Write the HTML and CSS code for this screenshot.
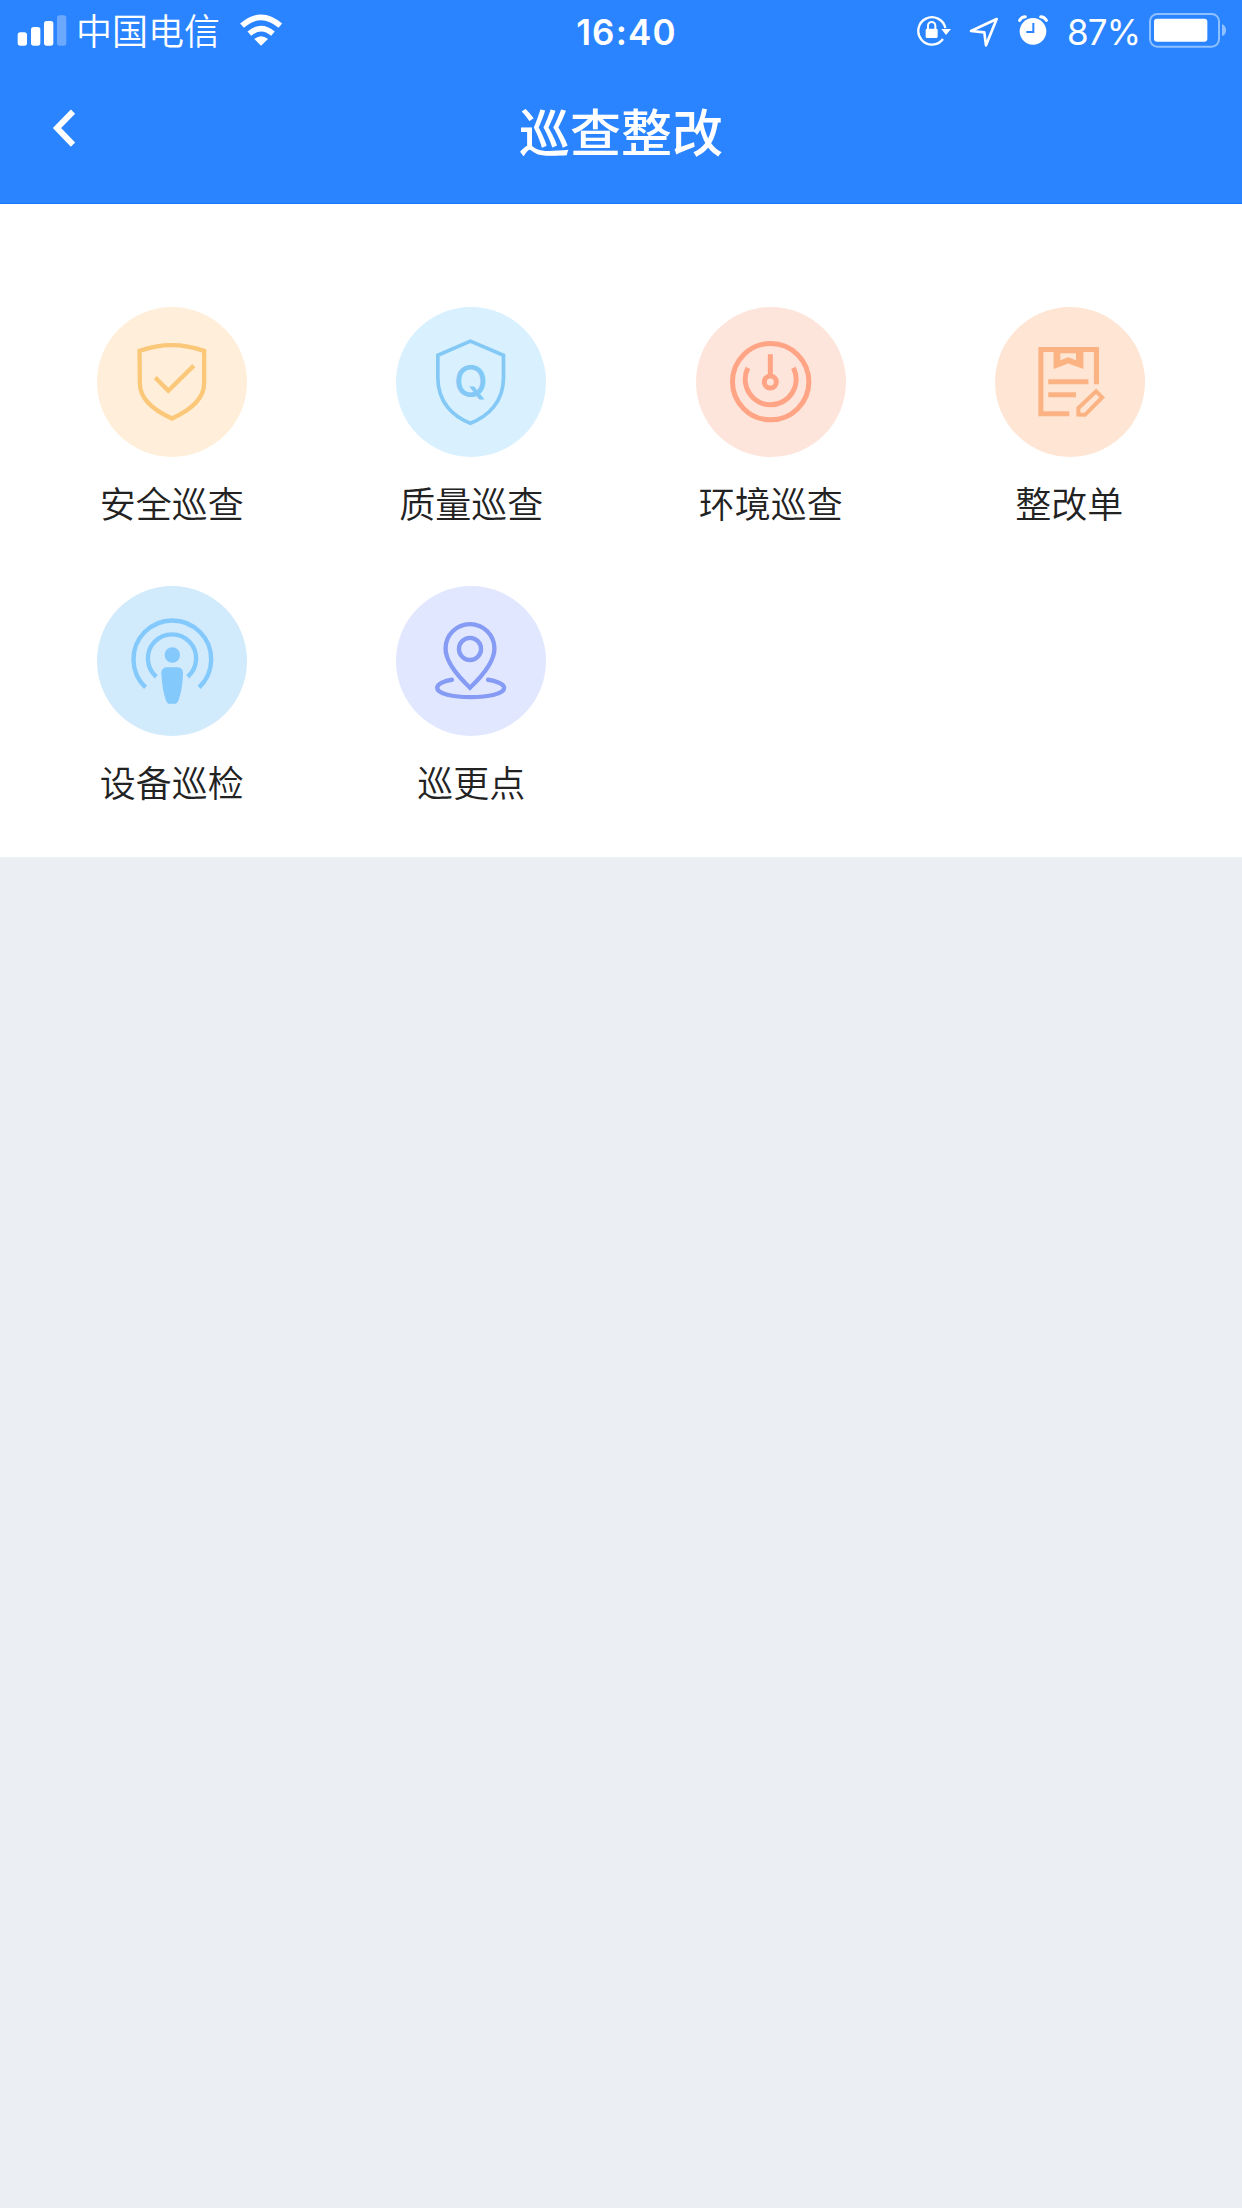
FILE: index.html
```html
<!DOCTYPE html>
<html lang="zh-CN">
<head>
<meta charset="utf-8">
<title>巡查整改</title>
<link rel="stylesheet" href="styles.css">
</head>
<body>
<header class="header">
  <div class="status">
    <div class="status-left">
      <svg class="signal" viewBox="51 45 150 93" fill="#fff">
        <rect x="53" y="97" width="28" height="40" rx="8"/>
        <rect x="93" y="81" width="28" height="56" rx="8"/>
        <rect x="132" y="63" width="28" height="74" rx="8"/>
        <rect x="171" y="46" width="28" height="91" rx="8" opacity=".3"/>
      </svg>
      <span class="carrier">中国电信</span>
      <svg class="wifi" viewBox="717 42 132 96" fill="none" stroke="#fff" stroke-width="17">
        <path d="M726 77Q783 27 841 77"/>
        <path d="M748 101Q783 71 819 101"/>
        <path d="M763 117Q783 100 804 117L783 137Z" fill="#fff" stroke="none"/>
      </svg>
    </div>
    <span class="time">16:40</span>
    <div class="status-right">
      <svg class="lock" viewBox="48 42 105 96" fill="none" stroke="#fff" stroke-width="7">
        <path d="M129 117A41 41 0 1 1 136 84"/>
        <path d="M124 87H153L138 105Z" fill="#fff" stroke="none"/>
        <path d="M84 88V77a11 11 0 0 1 22 0V88" stroke-width="6"/>
        <rect x="77" y="86" width="36" height="28" rx="4" fill="#fff" stroke="none"/>
      </svg>
      <svg class="locate" viewBox="207 48 90 90" fill="none" stroke="#fff" stroke-width="8" stroke-linejoin="round">
        <path d="M290 54L213 90L253 94L258 133Z"/>
      </svg>
      <svg class="alarm" viewBox="354 42 90 93" fill="none">
        <circle cx="399" cy="94" r="40" fill="#fff"/>
        <path d="M359 61Q365 50 376 50M439 61Q433 50 422 50" stroke="#fff" stroke-width="9" stroke-linecap="round"/>
        <path d="M400 69V96H379" stroke="#2a84ff" stroke-width="6"/>
      </svg>
      <span class="percent">87%</span>
      <svg class="battery" viewBox="747 39 234 105">
        <rect x="750" y="42" width="207" height="98" rx="22" fill="none" stroke="#8fc0ff" stroke-width="6"/>
        <rect x="762" y="56" width="160" height="69" rx="9" fill="#fff"/>
        <path d="M966 73Q978 77 978 91T966 108Z" fill="#8fc0ff"/>
      </svg>
    </div>
  </div>
  <nav class="navbar">
    <svg class="back" viewBox="153 324 78 120" fill="none" stroke="#fff" stroke-width="18">
      <path d="M219 335L171 384L219 434"/>
    </svg>
    <h1 class="title">巡查整改</h1>
  </nav>
</header>
<main class="menu">
  <a class="item">
    <svg class="icon amber" viewBox="54 53 448 448">
      <path d="M181 184Q230 167 277 167T374 184V281C374 330 329 363 278 386C226 363 182 330 182 281Z"/>
      <path d="M228 264L267 303L343 228"/>
    </svg>
    <span class="label">安全巡查</span>
  </a>
  <a class="item">
    <svg class="icon sky" viewBox="50 53 448 448">
      <path d="M272 155L371 197V265C371 337 324 380 272 400C220 380 175 337 175 265V197Z"/>
      <text class="letter" x="273" y="323">Q</text>
    </svg>
    <span class="label">质量巡查</span>
  </a>
  <a class="item">
    <svg class="icon coral" viewBox="49 53 448 448">
      <circle cx="272" cy="276" r="114"/>
      <circle cx="271" cy="277" r="18"/>
      <path d="M271 194V257M204 235A76 76 0 1 0 340 235"/>
    </svg>
    <span class="label">环境巡查</span>
  </a>
  <a class="item">
    <svg class="icon orange" viewBox="50 53 448 448">
      <path d="M272 372H187V180H353V284"/>
      <path d="M209 276H329M209 315H292"/>
      <path d="M225 180H314V238L269 222L225 238Z" fill="#fbb383" stroke="none"/>
      <path d="M245 191H292V212L269 203L245 212Z" fill="#fee5d4" stroke="none"/>
      <path d="M299 374V355L352 305L370 323L319 375Z" stroke-width="12"/>
    </svg>
    <span class="label label-short">整改单</span>
  </a>
  <a class="item">
    <svg class="icon blue" viewBox="53 51 448 448">
      <path d="M198 354A116 116 0 1 1 358 354M230 322A72 72 0 1 1 324 322"/>
      <circle class="solid" cx="278" cy="257" r="23"/>
      <path class="solid" d="M245 311Q245 294 264 294H291Q310 294 310 311Q308 365 296 393Q292 403 284 403H270Q263 403 259 393Q248 365 245 311Z"/>
    </svg>
    <span class="label">设备巡检</span>
  </a>
  <a class="item">
    <svg class="icon violet" viewBox="50 49 448 448">
      <path d="M271 353C234 318 198 277 198 236A73 73 0 0 1 344 236C344 277 308 318 271 353Z"/>
      <circle cx="271" cy="237" r="33"/>
      <path d="M217 329C196 332 173 341 173 353C173 371 220 381 273 381S373 371 373 353C373 341 347 332 325 329" stroke-linecap="round"/>
    </svg>
    <span class="label">巡更点</span>
  </a>
</main>
</body>
</html>
```
FILE: styles.css
```css
* { box-sizing: border-box; }
body {
  margin: 0;
  min-height: 2208px;
  background: #ebeff4;
  color: #222;
  font-family: Inter, "Noto Sans CJK SC", sans-serif;
}
svg { display: block; flex: none; }
.header {
  height: 204px;
  background: #2a84ff;
  border-bottom: 1px solid #1778fa;
  color: #fff;
}
.status {
  display: grid;
  grid-template-columns: 1fr 120px 1fr;
  align-items: center;
  height: 64px;
  padding: 0 15px 0 17px;
}
.status-left, .status-right { display: flex; align-items: center; }
.status-right { justify-content: flex-end; }
.signal { width: 50px; height: 31px; margin-top: -3px; }
.carrier {
  width: 144px;
  margin: -6px 19px 0 9px;
  font: 350 36px/60px "Noto Sans CJK SC", sans-serif;
  white-space: nowrap;
}
.wifi { width: 44px; height: 32px; margin-top: -4px; }
.time {
  font-size: 35px;
  font-weight: 600;
  letter-spacing: 1.2px;
  text-align: center;
  padding-left: 9px;
  white-space: nowrap;
}
.lock { width: 35px; height: 32px; margin: -4px 18px 0 0; }
.locate { width: 30px; height: 30px; margin-right: 19px; }
.alarm { width: 30px; height: 31px; margin: -5px 19px 0 0; }
.percent { width: 73px; margin-right: 9px; font-size: 35px; letter-spacing: -.8px; white-space: nowrap; }
.battery { width: 78px; height: 35px; margin-top: -3px; }
.navbar {
  display: grid;
  grid-template-columns: 120px 1fr 120px;
  align-items: center;
  height: 138px;
}
.back { width: 26px; height: 40px; margin: -10px 0 0 51px; }
.title {
  margin: -7px 0 0;
  font: 500 51px/72px "Noto Sans CJK SC", sans-serif;
  text-align: center;
}
.menu {
  display: grid;
  grid-template-columns: repeat(4, 1fr);
  grid-auto-rows: 279px;
  height: 653px;
  padding: 103px 22px 0;
  background: #fff;
}
.item { display: flex; flex-direction: column; align-items: center; }
.icon {
  width: 150px;
  height: 150px;
  border-radius: 50%;
  fill: none;
  stroke-width: 13;
}
.label {
  margin-top: 18px;
  font: 350 36px/54px "Noto Sans CJK SC", sans-serif;
}
.label-short { margin-right: 2px; }
.letter {
  fill: #84c9f5;
  stroke: none;
  font: 500 132px Inter, sans-serif;
  text-anchor: middle;
}
.solid { fill: #83c9fc; stroke: none; }
.amber { background: #ffefda; stroke: #fbc779; }
.sky { background: #d9f0ff; stroke: #84c9f5; stroke-width: 11; }
.coral { background: #fee5dc; stroke: #ffa484; stroke-width: 15; }
.orange { background: #fee5d4; stroke: #fbb383; stroke-width: 15; }
.blue { background: #d1eafc; stroke: #83c9fc; }
.violet { background: #e1e7ff; stroke: #869bf4; }
```
